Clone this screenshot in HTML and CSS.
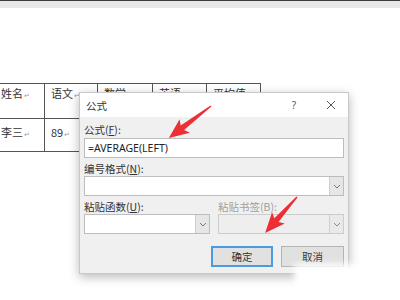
FILE: index.html
```html
<!DOCTYPE html>
<html>
<head>
<meta charset="utf-8">
<link rel="stylesheet" href="styles.css">
</head>
<body>
<div class="page">
  <div class="topbar"></div>
  <table class="doc">
    <colgroup><col class="c1"><col class="c2"><col class="c3"><col class="c4"><col class="c5"></colgroup>
    <tr class="r1"><td>姓名<span class="pm">↵</span></td><td>语文<span class="pm">↵</span></td><td>数学<span class="pm">↵</span></td><td>英语<span class="pm">↵</span></td><td>平均值<span class="pm">↵</span><span class="rowend">↵</span></td></tr>
    <tr class="r2"><td>李三<span class="pm">↵</span></td><td>89<span class="pm">↵</span></td><td></td><td></td><td></td></tr>
  </table>

  <div class="dialog">
    <div class="titlebar">
      <span class="title">公式</span>
      <span class="help">?</span>
      <svg class="close" width="10" height="10" viewBox="0 0 10 10"><path d="M1 1L9 9M9 1L1 9" stroke="#555" stroke-width="1" fill="none"/></svg>
    </div>
    <div class="body">
      <div class="label l1">公式(<u>F</u>):</div>
      <div class="input">=AVERAGE(LEFT)</div>
      <div class="label">编号格式(<u>N</u>):</div>
      <div class="combo"><span class="field"></span><span class="drop"><svg width="8" height="5" viewBox="0 0 8 5"><path d="M1 1L4 4L7 1" stroke="#777" fill="none"/></svg></span></div>
      <div class="pair">
        <div class="col">
          <div class="label">粘贴函数(<u>U</u>):</div>
          <div class="combo"><span class="field"></span><span class="drop"><svg width="8" height="5" viewBox="0 0 8 5"><path d="M1 1L4 4L7 1" stroke="#777" fill="none"/></svg></span></div>
        </div>
        <div class="col">
          <div class="label disabled">粘贴书签(B):</div>
          <div class="combo off"><span class="field"></span><span class="drop"><svg width="8" height="5" viewBox="0 0 8 5"><path d="M1 1L4 4L7 1" stroke="#888" fill="none"/></svg></span></div>
        </div>
      </div>
      <div class="buttons">
        <div class="btn primary">确定</div>
        <div class="btn">取消</div>
      </div>
    </div>
  </div>

  <div class="blot"></div>

  <svg class="arrows" width="400" height="300" viewBox="0 0 400 300">
    <g transform="translate(211 106) rotate(142.7)" fill="#ec2f35">
      <polygon points="0,-0.7 36,-2.8 33,-8.5 53,0 33,8.5 36,2.8 0,0.7"/>
    </g>
    <g transform="translate(297 197) rotate(131.6)" fill="#ec2f35">
      <polygon points="0,-0.7 31,-2.8 28,-8.5 48,0 28,8.5 31,2.8 0,0.7"/>
    </g>
  </svg>
</div>
</body>
</html>
```

FILE: styles.css
```css
* { box-sizing: border-box; }
html, body { margin: 0; padding: 0; }
body {
  background: #fff;
  font-family: "Noto Sans", "Noto Sans CJK SC", sans-serif;
  overflow: hidden;
}
.page {
  position: relative;
  width: 400px;
  height: 300px;
  overflow: hidden;
}
.topbar {
  height: 8px;
  background: #e8e8e8;
  border-top: 1px solid #3a3a3a;
}
.doc {
  margin-top: 75px;
  margin-left: -6px;
  border-collapse: collapse;
  table-layout: fixed;
  width: 267px;
  font-family: "Noto Sans CJK SC", sans-serif;
  font-size: 11px;
  color: #333;
}
.c1 { width: 50px; }
.c2 { width: 53px; }
.c3 { width: 55px; }
.c4 { width: 54px; }
.c5 { width: 54px; }
.doc td {
  border: 1px solid #555;
  vertical-align: top;
  padding: 2px 5px 0 6px;
  line-height: 15px;
  white-space: nowrap;
  position: relative;
}
.doc .r1 td { height: 35px; }
.doc .r2 td { height: 33px; padding-top: 6px; }
.pm { font-size: 7px; color: #999; margin-left: 1px; }
.rowend {
  position: absolute;
  left: 57px;
  top: 4px;
  font-size: 7px;
  color: #999;
}
.dialog {
  position: absolute;
  left: 79px;
  top: 92px;
  width: 270px;
  height: 182px;
  background: #f0f0f0;
  border: 1px solid #c8c8c8;
  box-shadow: 0 3px 10px rgba(0,0,0,0.28);
  font-family: "Noto Sans CJK SC", sans-serif;
  font-size: 10.5px;
  color: #333;
}
.titlebar {
  height: 24px;
  background: #fff;
  display: flex;
  align-items: center;
  padding-left: 6px;
  position: relative;
}
.title { flex: 1; font-size: 10.5px; color: #333; }
.help { width: 12px; text-align: center; font-size: 10px; color: #555; margin-right: 26px; font-family: "Noto Sans", sans-serif; }
.close { margin-right: 12px; }
.body { padding: 5px 4px 0 4px; }
.label { line-height: 15px; height: 15px; white-space: nowrap; }
.label.l1 { height: 16px; }
.label + .input, .label + .combo { margin-top: 0; }
.input {
  height: 20px;
  background: #fff;
  border: 1px solid #bdbdbd;
  padding-left: 3px;
  line-height: 18px;
  font-family: "Noto Sans", sans-serif;
  font-size: 10.5px;
  color: #222;
  margin-bottom: 3px;
}
.combo {
  height: 20px;
  background: #fff;
  border: 1px solid #bdbdbd;
  display: flex;
  margin-bottom: 3px;
}
.combo + .pair { margin-top: 2px; }
.combo .field { flex: 1; }
.combo .drop {
  width: 14px;
  background: #e6e6e6;
  border-left: 1px solid #cfcfcf;
  display: flex;
  align-items: center;
  justify-content: center;
}
.combo.off { background: #eeeeee; border-color: #cccccc; }
.combo.off .drop { background: #e9e9e9; }
.disabled { color: #a0a0a0; }
.pair { display: flex; gap: 8px; }
.pair .col { flex: 1; }
.pair .combo { margin-bottom: 0; }
.buttons {
  display: flex;
  justify-content: flex-end;
  gap: 8px;
  margin-top: 12px;
}
.btn {
  width: 63px;
  height: 21px;
  background: #e1e1e1;
  border: 1px solid #b4b4b4;
  text-align: center;
  line-height: 19px;
  font-size: 10.5px;
  color: #333;
}
.btn.primary { width: 62px; border: 2px solid #4a9be0; line-height: 17px; }
.blot {
  position: absolute;
  left: 294px;
  top: 264px;
  width: 96px;
  height: 40px;
  background: #fff;
  filter: blur(3px);
}
.arrows { position: absolute; left: 0; top: 0; }
```
